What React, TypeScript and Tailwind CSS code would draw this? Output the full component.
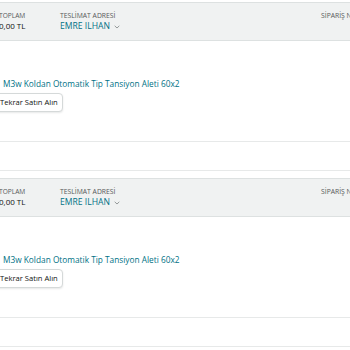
import React from "react";

function Chevron() {
  return (
    <svg width="6" height="4" viewBox="0 0 6 4" className="ml-[4px] mt-[1px] shrink-0">
      <path d="M0.7 0.8 L3 3 L5.3 0.8" fill="none" stroke="#8a9090" strokeWidth="0.9" />
    </svg>
  );
}

function Card({ last }: { last?: boolean }) {
  return (
    <div className="flex flex-col">
      <div className="h-px bg-[#e7e9e9]" />
      <div className="h-[7px]" />
      <div className="h-[39px] bg-[#f0f2f2] border-y border-[#dde1e1] flex pl-[17px] pt-[9px]">
        <div className="w-[61px] shrink-0 flex flex-col">
          <span className="text-[6.6px] leading-[8px] text-[#565959]">TOPLAM</span>
          <span className="text-[8px] leading-[12px] text-[#0f1111]">0,00 TL</span>
        </div>
        <div className="w-[261px] shrink-0 flex flex-col">
          <span className="text-[6.8px] leading-[8px] text-[#565959]">TESLİMAT ADRESİ</span>
          <span className="text-[8.6px] leading-[12px] text-[#007185] flex items-center">
            EMRE ILHAN
            <Chevron />
          </span>
        </div>
        <div className="shrink-0 flex flex-col whitespace-nowrap">
          <span className="text-[6.8px] leading-[8px] text-[#565959]">SİPARİŞ N</span>
        </div>
      </div>
      <div className="h-[37px]" />
      <div className="pl-[21px] text-[8.3px] leading-[12px] text-[#007185] whitespace-nowrap">
        M3w Koldan Otomatik Tip Tansiyon Aleti 60x2
      </div>
      <div className="h-[3px]" />
      <div className="pl-[6px] flex">
        <div className="h-[19px] w-[75px] rounded-[4px] border border-[#d5d9d9] bg-white shadow-[0_1px_2px_rgba(213,217,217,0.6)] flex items-center pl-[11px] text-[7.6px] text-[#0f1111] whitespace-nowrap">
          Tekrar Satın Alın
        </div>
      </div>
      <div className="h-[29px]" />
      <div className="h-px bg-[#e7e9e9]" />
      <div className="h-[28px]" />
      {last ? <div className="h-px bg-[#e7e9e9]" /> : null}
    </div>
  );
}

export default function App() {
  return (
    <div
      className="w-[350px] h-[350px] overflow-hidden bg-white"
      style={{ fontFamily: '"Open Sans", "Noto Sans", sans-serif' }}
    >
      <div className="mt-[-6px] ml-[-18px] w-[368px] flex flex-col">
        <Card />
        <Card last />
      </div>
    </div>
  );
}
